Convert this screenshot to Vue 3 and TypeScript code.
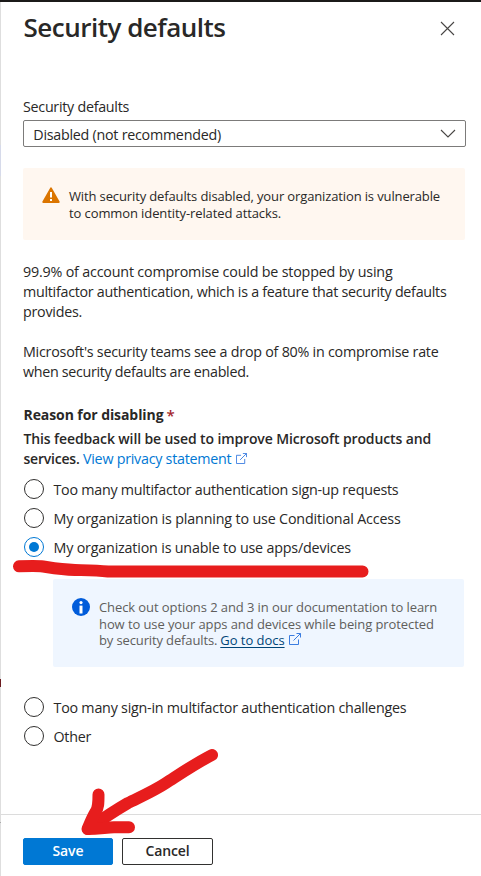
<script setup lang="ts">
import { ref } from 'vue'

const selected = ref(2)
const firstOptions = [
  { id: 0, label: 'Too many multifactor authentication sign-up requests', track: 'k26' },
  { id: 1, label: 'My organization is planning to use Conditional Access', track: 'k16' },
  { id: 2, label: 'My organization is unable to use apps/devices', track: 'k19' },
]
const lastOptions = [
  { id: 3, label: 'Too many sign-in multifactor authentication challenges', track: 'k23' },
  { id: 4, label: 'Other', track: 'k26' },
]
</script>

<template>
  <div class="page">
    <div class="edge"><i class="edge-blue"></i><i class="edge-red"></i><i class="edge-dot"></i></div>
    <main class="panel">
      <header class="head">
        <h1>Security defaults</h1>
        <svg class="close" width="15" height="15" viewBox="0 0 15 15"><path d="M1 1L14 14M14 1L1 14" /></svg>
      </header>

      <label class="label k28">Security defaults</label>
      <div class="select">
        <span class="k26">Disabled (not recommended)</span>
        <svg width="16" height="9" viewBox="0 0 16 9"><path d="M1 1L8 8L15 1" /></svg>
      </div>

      <section class="warning">
        <svg width="18" height="17" viewBox="0 0 18 17">
          <path d="M9 1.4L16.7 15H1.3Z" fill="#db7500" stroke="#db7500" stroke-width="2" stroke-linejoin="round" />
          <path d="M8 5h2v5.500H8zM8 12h2v2H8z" fill="#fff" />
        </svg>
        <div>
          <div class="k13">With security defaults disabled, your organization is vulnerable</div>
          <div class="k10">to common identity-related attacks.</div>
        </div>
      </section>

      <div class="para">
        <div class="k19">99.9% of account compromise could be stopped by using</div>
        <div class="k28">multifactor authentication, which is a feature that security defaults</div>
        <div class="k26">provides.</div>
      </div>
      <div class="para second">
        <div class="k24">Microsoft's security teams see a drop of 80% in compromise rate</div>
        <div class="k31">when security defaults are enabled.</div>
      </div>

      <h2><span class="k08">Reason for disabling</span><b class="star">*</b></h2>
      <div class="feedback">
        <div class="k12">This feedback will be used to improve Microsoft products and</div>
        <div class="feedback-row">
          <span class="k22">services.</span>
          <a class="privacy k26">View privacy statement</a>
          <svg class="ext" width="11" height="11" viewBox="0 0 12 12"><path d="M5.5 2.5H.5V11.5H9.5V6.5M7.5.5H11.5V4.5M11.5.5L4.5 7.5" /></svg>
        </div>
      </div>

      <div class="options">
        <div v-for="o in firstOptions" :key="o.id" class="option" @click="selected = o.id">
          <span class="radio" :class="{ on: selected === o.id }"></span>
          <span class="option-text" :class="o.track">{{ o.label }}</span>
        </div>
      </div>

      <section class="info">
        <svg width="18" height="18" viewBox="0 0 18 18">
          <circle cx="9" cy="9" r="9" fill="#015cda" />
          <circle cx="9" cy="4.600" r="1.600" fill="#fff" />
          <path d="M7.500 7.600h3V15.500h-3z" fill="#fff" />
        </svg>
        <div>
          <div class="k09">Check out options 2 and 3 in our documentation to learn</div>
          <div class="k09">how to use your apps and devices while being protected</div>
          <div class="docs-row">
            <span class="k13">by security defaults.</span>
            <a class="docs">Go to docs</a>
            <svg class="ext" width="12" height="12" viewBox="0 0 12 12"><path d="M5.5 2.5H.5V11.5H9.5V6.5M7.5.5H11.5V4.5M11.5.5L4.5 7.5" /></svg>
          </div>
        </div>
      </section>

      <div class="options">
        <div v-for="o in lastOptions" :key="o.id" class="option" @click="selected = o.id">
          <span class="radio" :class="{ on: selected === o.id }"></span>
          <span class="option-text" :class="o.track">{{ o.label }}</span>
        </div>
      </div>

      <footer class="foot">
        <button class="save">Save</button>
        <button class="cancel">Cancel</button>
      </footer>
    </main>

    <svg class="marks" width="481" height="876" viewBox="0 0 481 876">
      <path d="M19 566.3C28 566 35 565.9 41 566.2C50 567.5 60 569.5 75 570C88 570.3 97 570.3 108 571.5H362.5" />
      <path d="M212 755C196 763 180 774 166 783C154 791 140 797 128 803C116 810 108 815 88 829" />
      <path d="M98.500 794.500C98.500 803 98.500 808 95.500 812C92 818 90 823 87.500 829C99 829 106 827.500 114 827.300H129" />
    </svg>
  </div>
</template>

<style>
body { margin: 0; background: #fff; }
</style>

<style scoped>
.page { position: relative; box-sizing: border-box; width: 481px; height: 876px; display: flex; border-top: 2px solid #1b1a19; background: #fff; color: #292827; font: 14.3px/20px "Open Sans", "Noto Sans", sans-serif; overflow: hidden; white-space: nowrap; }
.edge { width: 1px; height: 874px; background: #dedede; display: flex; flex-direction: column; }
.edge i { display: block; width: 1px; }
.edge-blue { margin-top: 143px; height: 31px; background: #d6daea; }
.edge-red { margin-top: 503px; height: 8px; background: #6b1b1f; }
.edge-dot { margin-top: 135px; height: 1px; background: #aaa; }
.panel { width: 480px; display: flex; flex-direction: column; }
.head { display: flex; justify-content: space-between; height: 95px; padding: 7px 18px 0 22.500px; box-sizing: border-box; }
h1 { margin: 0; font-size: 26px; line-height: 36px; font-weight: 600; letter-spacing: -0.5px; }
.close { margin: 12px 8px 0 0; width: 15px; height: 15px; }
.close path, .select path { fill: none; stroke: #484644; stroke-width: 1.1; }
.label { margin-left: 22px; height: 20px; }
.select { box-sizing: border-box; margin: 3px 0 0 22px; width: 443px; height: 27px; border: 1px solid #7c7b7a; border-radius: 2px; padding: 2px 9px 0 9.300px; display: flex; justify-content: space-between; align-items: center; }
.select svg { margin-top: -2px; }
.warning { box-sizing: border-box; margin: 21px 0 0 22px; width: 442px; height: 72px; padding: 20px 0 0 19px; border-radius: 2px; background: #fff7f0; display: flex; gap: 9px; font-size: 13px; line-height: 17px; }
.warning svg { margin-top: -1px; }
.para { margin: 22px 0 0 22px; }
.para.second { margin-top: 20px; }
h2 { margin: 23px 0 0 22.500px; display: flex; font-size: 14px; line-height: 20px; font-weight: 700; }
.star { margin-left: 3px; color: #a4262c; font-weight: 600; font-size: 15px; }
.feedback { margin: 4px 0 0 22.500px; font-size: 14px; font-weight: 600; height: 45px; }
.feedback-row, .docs-row { display: flex; }
.privacy { margin-left: 3.500px; color: #0078d4; font-weight: 400; font-size: 14.3px; }
.ext { fill: none; stroke: #3b7de0; stroke-width: 1; }
.privacy + .ext { margin: 4px 0 0 4.500px; }
.options { margin-left: 23px; }
.option { height: 29px; display: flex; align-items: center; gap: 9.500px; }
.option-text { padding-top: 2px; }
.radio { box-sizing: border-box; width: 20px; height: 20px; border: 1px solid #323130; border-radius: 50%; display: flex; align-items: center; justify-content: center; }
.radio.on { border-color: #0078d4; }
.radio.on::after { content: ""; width: 10px; height: 10px; border-radius: 50%; background: #0078d4; }
.info { box-sizing: border-box; margin: 18px 0 25px 52px; width: 411px; height: 88px; padding: 20px 0 0 19px; border-radius: 2px; background: #eff6ff; color: #605e5c; display: flex; gap: 9px; font-size: 13px; line-height: 16.500px; }
.info > svg { margin-top: -1px; }
.docs { margin-left: 3px; color: #004578; text-decoration: underline; text-underline-offset: 2px; letter-spacing: -.04px; }
.docs + .ext { margin: 1px 0 0 4px; }
.foot { box-sizing: border-box; height: 62px; margin-top: auto; border-top: 1px solid #dcdcdc; padding: 23px 0 0 22px; display: flex; gap: 9px; }
button { box-sizing: border-box; height: 27px; padding: 0 0 1px; border-radius: 2px; font: 600 14px/20px "Open Sans", "Noto Sans", sans-serif; }
.save { width: 90px; border: 1px solid #0078d4; background: #0078d4; color: #fff; letter-spacing: -.09px; }
.cancel { width: 91px; border: 1px solid #323130; background: #fff; color: #292827; letter-spacing: -.13px; }
.marks { position: absolute; left: 0; top: -2px; pointer-events: none; }
.marks path { fill: none; stroke: #e71d1d; stroke-width: 12; stroke-linecap: round; stroke-linejoin: round; }
.k08 { letter-spacing: -.08px; }
.k09 { letter-spacing: -.09px; }
.k10 { letter-spacing: -.1px; }
.k12 { letter-spacing: -.122px; }
.k13 { letter-spacing: -.13px; }
.k16 { letter-spacing: -.162px; }
.k19 { letter-spacing: -.187px; }
.k22 { letter-spacing: -.22px; }
.k23 { letter-spacing: -.23px; }
.k24 { letter-spacing: -.24px; }
.k26 { letter-spacing: -.26px; }
.k28 { letter-spacing: -.278px; }
.k31 { letter-spacing: -.312px; }
</style>
